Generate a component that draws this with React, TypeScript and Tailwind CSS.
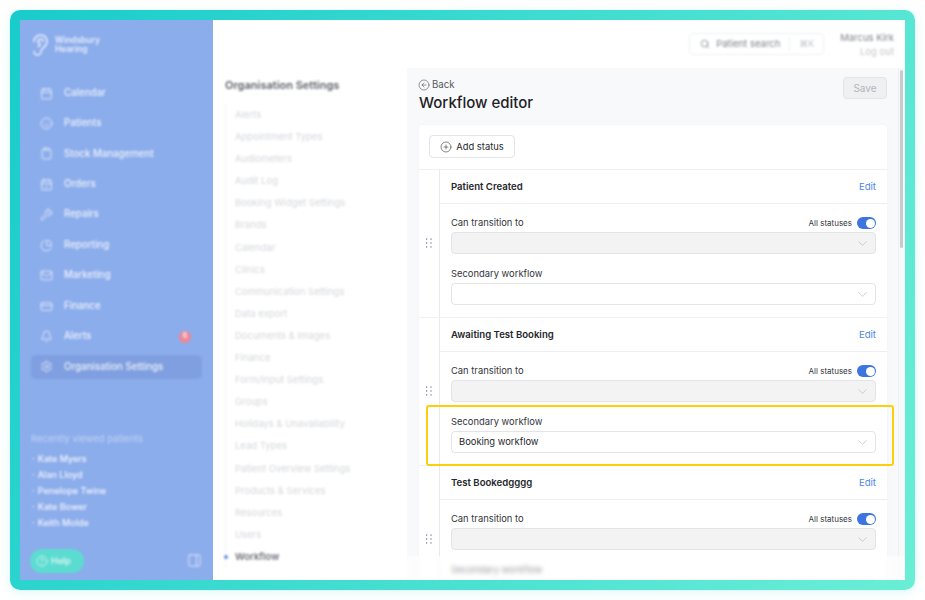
import {
  Bell,
  Calendar,
  CalendarCheck,
  ChevronDown,
  CircleArrowLeft,
  CircleHelp,
  CirclePlus,
  Clipboard,
  CreditCard,
  Ear,
  Mail,
  PanelRight,
  PieChart,
  Search,
  Settings,
  Smile,
  Wrench
} from 'lucide-react'

const navItems = [
  { label: 'Calendar', icon: Calendar },
  { label: 'Patients', icon: Smile },
  { label: 'Stock Management', icon: Clipboard },
  { label: 'Orders', icon: CalendarCheck },
  { label: 'Repairs', icon: Wrench },
  { label: 'Reporting', icon: PieChart },
  { label: 'Marketing', icon: Mail },
  { label: 'Finance', icon: CreditCard },
  { label: 'Alerts', icon: Bell, badge: '6' },
  { label: 'Organisation Settings', icon: Settings, active: true }
]

const recentPatients = [
  'Kate Myers',
  'Alan Lloyd',
  'Penelope Twine',
  'Kate Bower',
  'Keith Molde'
]

const settingsItems = [
  'Alerts',
  'Appointment Types',
  'Audiometers',
  'Audit Log',
  'Booking Widget Settings',
  'Brands',
  'Calendar',
  'Clinics',
  'Communication Settings',
  'Data export',
  'Documents & Images',
  'Finance',
  'Form/Input Settings',
  'Groups',
  'Holidays & Unavailability',
  'Lead Types',
  'Patient Overview Settings',
  'Products & Services',
  'Resources',
  'Users',
  'Workflow'
]

const statuses = [
  { title: 'Patient Created', secondary: '' },
  { title: 'Awaiting Test Booking', secondary: 'Booking workflow' },
  { title: 'Test Bookedgggg', secondary: '' }
]

function Grip() {
  return (
    <svg width="6" height="10" viewBox="0 0 6 10" className="fill-[#6b7280]">
      <rect x="0" y="0.5" width="1.2" height="1.2" />
      <rect x="4.4" y="0.5" width="1.2" height="1.2" />
      <rect x="0" y="4.4" width="1.2" height="1.2" />
      <rect x="4.4" y="4.4" width="1.2" height="1.2" />
      <rect x="0" y="8.3" width="1.2" height="1.2" />
      <rect x="4.4" y="8.3" width="1.2" height="1.2" />
    </svg>
  )
}

function Select({ value, disabled }: { value?: string; disabled?: boolean }) {
  return (
    <div
      className={`mt-[1px] flex h-[22px] items-center justify-between rounded-[4px] border border-[#e3e4e8] pl-[7px] pr-[5px] text-[9.4px] text-[#25272c] ${
        disabled ? 'bg-[#f3f3f4]' : 'bg-white'
      }`}>
      <span className="pt-[1px]">{value}</span>
      <ChevronDown className="h-[15px] w-[15px] text-[#b4b7be]" strokeWidth={1} />
    </div>
  )
}

function StatusSection({ title, secondary }: { title: string; secondary: string }) {
  return (
    <div className="flex h-[148px] shrink-0 border-t border-[#f0f1f3]">
      <div className="flex w-[21px] shrink-0 items-center justify-center border-r border-[#e9eaee] pb-[2px] pr-[1px]">
        <Grip />
      </div>
      <div className="flex-1">
        <div className="flex h-[34px] items-center justify-between border-b border-[#eeeff2] px-[11px] pt-[1px]">
          <span className="text-[9.6px] font-semibold text-[#25272c]">{title}</span>
          <span className="text-[9.6px] text-[#4a86e8]">Edit</span>
        </div>
        <div className="px-[11px] pt-[11px]">
          <div className="flex h-[16px] items-center justify-between">
            <span className="text-[9.4px] text-[#33363c]">Can transition to</span>
            <div className="flex items-center gap-[5px]">
              <span className="text-[8px] text-[#33363c]">All statuses</span>
              <div className="flex h-[12px] w-[19px] items-center justify-end rounded-full bg-[#3c74e0] pr-[1.5px]">
                <div className="h-[9px] w-[9px] rounded-full bg-white" />
              </div>
            </div>
          </div>
          <Select disabled />
          <div className="mt-[12px] flex h-[16px] items-center text-[9.4px] text-[#33363c]">
            Secondary workflow
          </div>
          <Select value={secondary} />
        </div>
      </div>
    </div>
  )
}

export default function App() {
  return (
    <div className="h-[600px] w-[925px] overflow-hidden bg-white p-[10px] font-['Inter',sans-serif]">
      <div className="h-[580px] rounded-[10px] bg-linear-[115deg] from-[#18cccb] to-[#6aeed6] p-[10px] shadow-[0_2px_10px_rgba(100,235,215,0.25)]">
        <div className="relative flex h-[560px] overflow-hidden bg-white">
          {/* sidebar */}
          <aside className="h-full w-[193px] shrink-0 overflow-hidden bg-[#8cadec]">
            <div className="flex h-full flex-col blur-[1.2px]">
              <div className="flex h-[48px] items-center gap-[3px] pl-[8px] pt-[2px] text-white/80">
                <Ear className="h-[30px] w-[24px]" strokeWidth={1.5} />
                <div className="text-[8.5px] font-semibold leading-[9px]">
                  Windsbury
                  <br />
                  Hearing
                </div>
              </div>
              <nav className="mt-[13px] flex flex-col px-[11px]">
                {navItems.map(({ label, icon: Icon, badge, active }) => (
                  <div
                    key={label}
                    className={`flex h-[24px] items-center gap-[11px] rounded-[5px] pl-[9px] text-[9.7px] font-medium text-white/85 [&:not(:first-child)]:mt-[6.45px] ${
                      active ? 'bg-[#7f9fe0]' : ''
                    }`}>
                    <Icon className="h-[13px] w-[13px] text-white/75" strokeWidth={1.75} />
                    <span className="flex-1">{label}</span>
                    {badge && (
                      <span className="mr-[11px] flex h-[12px] w-[12px] items-center justify-center rounded-full bg-[#ee8796] text-[7px] text-white">
                        {badge}
                      </span>
                    )}
                  </div>
                ))}
              </nav>
              <div className="mt-[53px] pl-[11px] text-[9.5px] text-white/45">
                Recently viewed patients
              </div>
              <ul className="mt-[5px] pl-[12px] text-[9px] font-medium text-white/90">
                {recentPatients.map((name) => (
                  <li key={name} className="flex h-[16px] gap-[3px] leading-[16px]">
                    <span>·</span>
                    {name}
                  </li>
                ))}
              </ul>
              <div className="mt-auto flex h-[31px] items-start justify-between px-[10px] pb-[8px]">
                <div className="flex h-[24px] w-[54px] items-center gap-[3px] rounded-full bg-[#5cdcd0] pl-[6px] text-[9px] font-medium text-white/85">
                  <CircleHelp className="h-[12px] w-[12px]" strokeWidth={1.5} />
                  Help
                </div>
                <PanelRight className="mr-[1px] mt-[4px] h-[15px] w-[15px] text-white/70" strokeWidth={1.5} />
              </div>
            </div>
          </aside>

          <div className="flex min-w-0 flex-1 flex-col">
            {/* header */}
            <header className="flex h-[48px] shrink-0 items-center justify-end gap-[16px] pr-[11px] blur-[0.8px]">
              <div className="flex h-[22px] w-[135px] items-center rounded-[4px] border border-[#eeeff2] pl-[10px] text-[9.5px] text-[#7f838b]">
                <Search className="h-[10px] w-[10px]" strokeWidth={2} />
                <span className="ml-[6px]">Patient search</span>
                <span className="ml-[9px] border-l border-[#eeeff2] pl-[9px] text-[9px] text-[#c3c5ca]">⌘K</span>
              </div>
              <div className="pt-[2px] text-right text-[9.5px] leading-[14px]">
                <div className="text-[#7f838b]">Marcus Kirk</div>
                <div className="text-[#c3c5ca]">Log out</div>
              </div>
            </header>

            <div className="flex min-h-0 flex-1">
              {/* settings nav */}
              <div className="w-[194px] shrink-0 overflow-hidden pl-[12px] blur-[1px]">
                <div className="mt-[10px] text-[11px] font-semibold leading-[14px] text-[#5d6068]">
                  Organisation Settings
                </div>
                <div className="relative mt-[12px] border-l border-[#f2f3f5] pl-[9px]">
                  {settingsItems.map((item) => (
                    <div
                      key={item}
                      className={`h-[22.1px] text-[9.5px] leading-[22px] ${
                        item === 'Workflow' ? 'font-semibold text-[#6b6e76]' : 'text-[#d4d6da]'
                      }`}>
                      {item}
                    </div>
                  ))}
                  <div className="absolute bottom-[9px] left-[-2px] h-[4px] w-[4px] rounded-full bg-[#5f8fe8]" />
                </div>
              </div>

              {/* main */}
              <main className="relative min-w-0 flex-1 overflow-hidden bg-[#f8f9fb] pl-[12px] pr-[18px]">
                <div className="flex items-start justify-between">
                  <div>
                    <div className="-ml-[1px] mt-[10px] flex h-[14px] items-center gap-[2px] text-[9.7px] text-[#555962]">
                      <CircleArrowLeft className="h-[12px] w-[12px]" strokeWidth={1.25} />
                      Back
                    </div>
                    <h1 className="mt-[1px] text-[15px] font-medium leading-[20px] text-[#1f2126]">
                      Workflow editor
                    </h1>
                  </div>
                  <div className="mt-[9px] flex h-[22px] w-[44px] items-center justify-center rounded-[4px] border border-[#e3e4e8] bg-[#eff0f2] text-[10px] text-[#b2b5bb]">
                    Save
                  </div>
                </div>

                <div className="mt-[12px] rounded-t-[4px] bg-white shadow-[0_0_3px_rgba(0,0,0,0.04)]">
                  <div className="flex h-[44px] items-center pb-[1px] pl-[10px]">
                    <div className="flex h-[23px] w-[86px] items-center justify-center gap-[4px] rounded-[4px] border border-[#e3e4e8] text-[9.4px] text-[#25272c]">
                      <CirclePlus className="h-[12px] w-[12px]" strokeWidth={1.1} />
                      <span className="pt-[1px]">Add status</span>
                    </div>
                  </div>
                  {statuses.map((status) => (
                    <StatusSection key={status.title} {...status} />
                  ))}
                </div>

                <div className="absolute bottom-0 right-[6px] top-0 w-px bg-[#eeeff2]" />
                <div className="absolute right-[2px] top-[2px] h-[178px] w-[3px] rounded-full bg-[#c9cacd]" />
                <div className="absolute inset-x-0 bottom-0 h-[24px] bg-white/50 backdrop-blur-[2px]" />
                <div className="absolute left-[19px] top-[337px] h-[61px] w-[468px] rounded-[3px] border-2 border-[#fbcf0a]" />
              </main>
            </div>
          </div>
        </div>
      </div>
    </div>
  )
}
